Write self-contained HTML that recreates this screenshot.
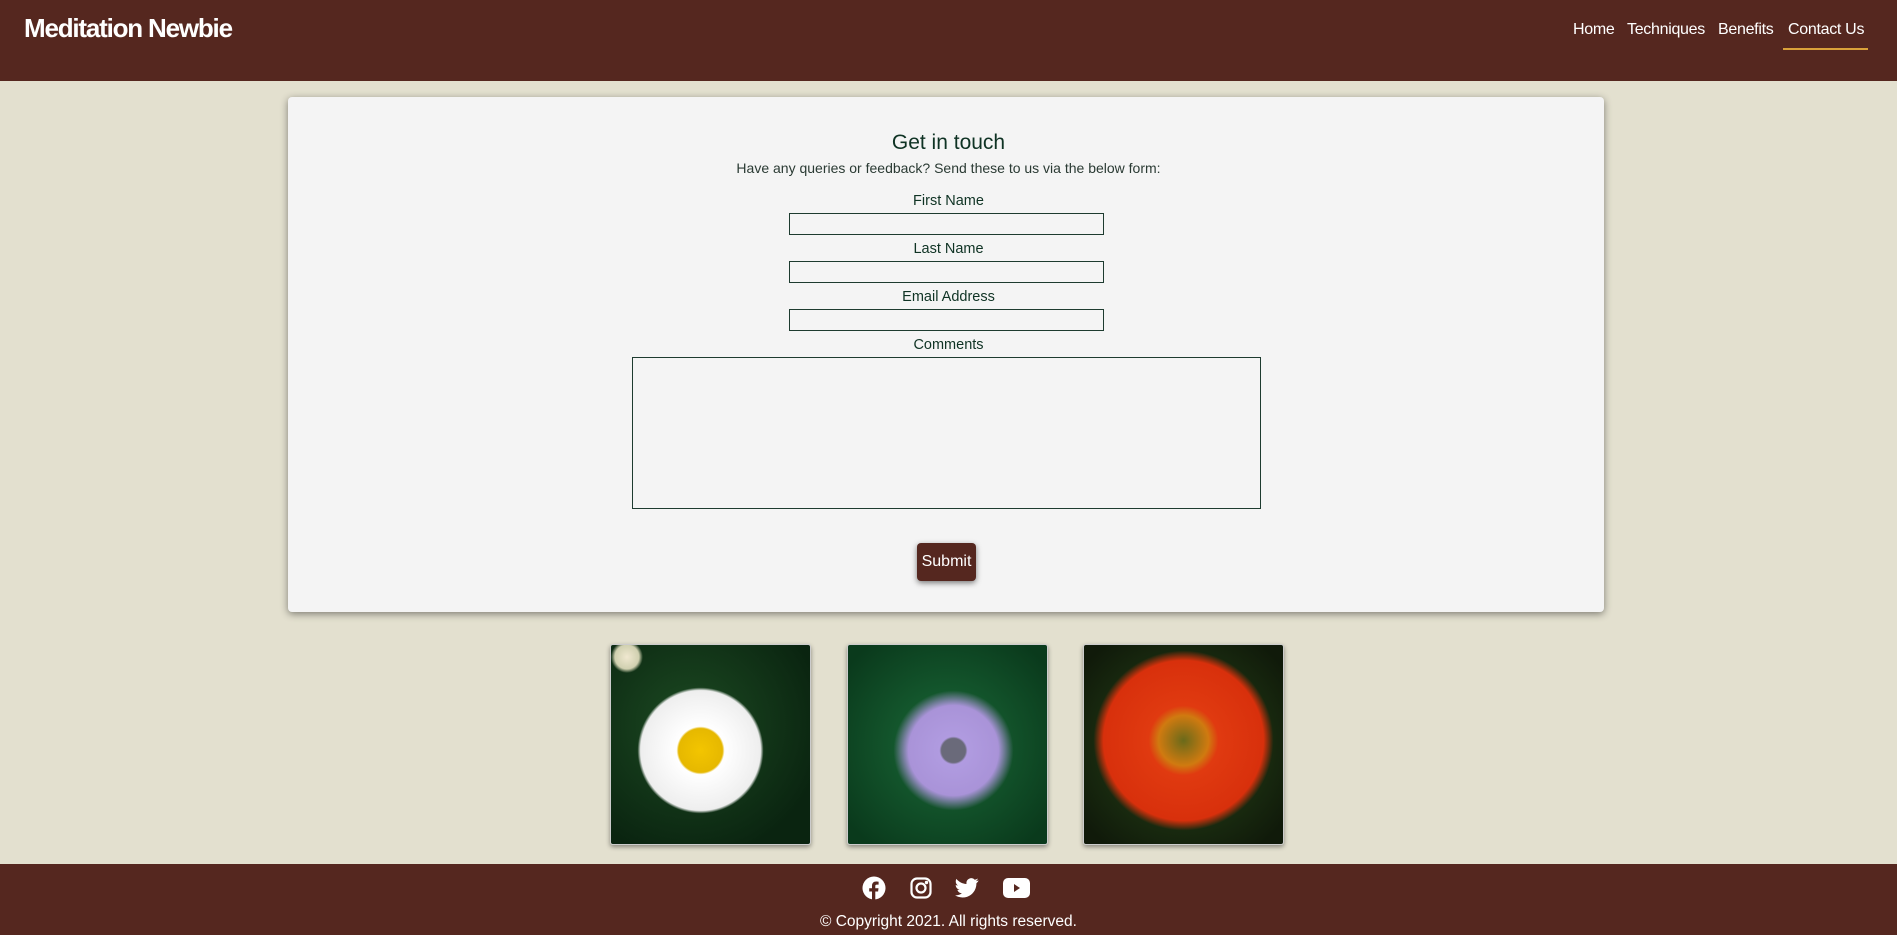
<!DOCTYPE html>
<html><head><meta charset="utf-8"><style>
*{margin:0;padding:0;box-sizing:border-box}
html,body{width:1897px;height:935px;overflow:hidden}
body{background:#e3e0cf;font-family:"Liberation Sans",sans-serif;position:relative}
header{position:absolute;left:0;top:0;width:1897px;height:81px;background:#55271f}
.logo{position:absolute;left:24px;top:13px;color:#fff;font-size:26px;font-weight:bold;letter-spacing:-1.2px}
nav a{position:absolute;top:21px;color:#fff;font-size:16px;text-decoration:none;letter-spacing:-0.3px}
.ul{position:absolute;left:1783px;top:48px;width:85px;height:2px;background:#d9a13a}
.card{position:absolute;left:288px;top:97px;width:1316px;height:515px;background:#f4f4f4;border-radius:4px;box-shadow:0 2px 8px rgba(0,0,0,.45)}
.c{position:absolute;left:0;width:1897px;text-align:center;color:#0f3324}
.sub{font-size:14px;top:160px;color:#2a3a33}
.lab{font-size:14.5px}
.in{position:absolute;left:789px;width:315px;height:22px;border:1.5px solid #1d3b2f;background:#f4f4f4}
.ta{position:absolute;left:632px;top:357px;width:629px;height:152px;border:1.5px solid #1d3b2f}
.btn{position:absolute;left:917px;top:543px;width:59px;height:38px;background:#55271f;color:#fff;border-radius:4px;font-size:16px;text-align:center;line-height:38px;box-shadow:0 2px 6px rgba(0,0,0,.5)}
.img{position:absolute;top:644px;width:201px;height:201px;border:1px solid #ccc;border-radius:3px;box-shadow:0 2px 5px rgba(0,0,0,.4)}
footer{position:absolute;left:0;top:864px;width:1897px;height:71px;background:#55271f}
.copy{position:absolute;top:913px;width:1897px;text-align:center;color:#fff;font-size:15.5px}
</style></head><body>
<header><div class="logo">Meditation Newbie</div>
<nav><a style="left:1573px">Home</a><a style="left:1627px">Techniques</a><a style="left:1718px">Benefits</a><a style="left:1788px">Contact Us</a></nav>
<div class="ul"></div></header>
<div class="card"></div>
<div class="c" style="top:131px;font-size:21px">Get in touch</div>
<div class="c sub">Have any queries or feedback? Send these to us via the below form:</div>
<div class="c lab" style="top:193px">First Name</div><div class="in" style="top:213px"></div>
<div class="c lab" style="top:241px">Last Name</div><div class="in" style="top:261px"></div>
<div class="c lab" style="top:289px">Email Address</div><div class="in" style="top:309px"></div>
<div class="c lab" style="top:337px">Comments</div><div class="ta"></div>
<div class="btn">Submit</div>
<div class="img" style="left:610px;background:radial-gradient(circle at 45% 53%,#f3c500 0,#e6b800 22px,#fff 24px,#eee 60px,rgba(0,0,0,0) 63px),radial-gradient(circle at 8% 6%,#f0e8d0 0,#d0d0b0 12px,rgba(0,0,0,0) 16px),radial-gradient(circle at 40% 40%,#1c4a22,#0a2410 80%)"></div>
<div class="img" style="left:847px;background:radial-gradient(circle at 53% 53%,#6a6a7a 0,#6a6a7a 12px,#b09be0 14px,#a993d8 45px,rgba(0,0,0,0) 60px),radial-gradient(circle at 50% 50%,#1a6a38,#0a3a1c 90%)"></div>
<div class="img" style="left:1083px;background:radial-gradient(circle at 50% 48%,#6a6a1a 0,#d07a10 25px,#e03a10 35px,#d8300c 80px,rgba(0,0,0,0) 90px),radial-gradient(circle at 50% 50%,#2a4a1a,#101a0a 90%)"></div>
<footer>
<svg style="position:absolute;left:862px;top:12px" width="24" height="24" viewBox="0 0 24 24"><circle cx="12" cy="12" r="11.5" fill="#fff"/><path d="M13.3 24v-8.5h2.8l.4-3.3h-3.2v-2c0-1 .3-1.6 1.6-1.6h1.7V5.7c-.3 0-1.3-.2-2.5-.2-2.5 0-4.1 1.500-4.1 4.3v2.4H7.2v3.3H10V24z" fill="#55271f"/></svg>
<svg style="position:absolute;left:910px;top:13px" width="22" height="22" viewBox="0 0 22 22" fill="none" stroke="#fff" stroke-width="2.2"><rect x="1.5" y="1.5" width="19" height="19" rx="5.5"/><circle cx="11" cy="11" r="4.5"/><circle cx="16.5" cy="5.5" r=".6" fill="#fff"/></svg>
<svg style="position:absolute;left:955px;top:14px" width="24" height="20" viewBox="0 0 24 20"><path d="M23.6 2.4c-.9.4-1.8.6-2.8.8 1-.6 1.8-1.6 2.1-2.7-.9.6-2 1-3.1 1.2A4.9 4.9 0 0 0 11.5 6C7.4 5.8 3.8 3.9 1.4.9c-1.3 2.3-.6 5.2 1.5 6.6-.8 0-1.5-.2-2.2-.6 0 2.4 1.7 4.4 3.9 4.9-.7.2-1.5.2-2.2.1.6 2 2.5 3.4 4.6 3.4A9.9 9.9 0 0 1 0 17.3 14 14 0 0 0 7.5 19.5c9.1 0 14.1-7.5 13.9-14.3.9-.7 1.8-1.5 2.2-2.8z" fill="#fff"/></svg>
<svg style="position:absolute;left:1003px;top:14px" width="27" height="20" viewBox="0 0 27 20"><rect x="0" y="0" width="27" height="20" rx="5" fill="#fff"/><path d="M11 6v8l6-4z" fill="#55271f"/></svg>
</footer>
<div class="copy">© Copyright 2021. All rights reserved.</div>
</body></html>
